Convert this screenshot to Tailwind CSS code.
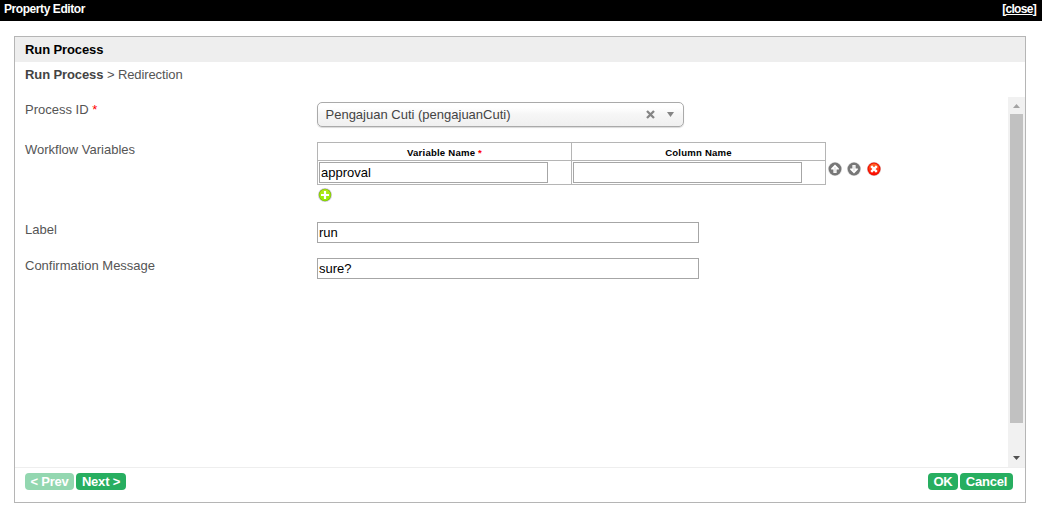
<!DOCTYPE html>
<html lang="en">
<head>
<meta charset="utf-8">
<title>Property Editor</title>
<script src="https://cdn.jsdelivr.net/npm/@tailwindcss/browser@4"></script>
</head>
<body class="h-[513px] overflow-hidden bg-white font-['Liberation_Sans',Arial,sans-serif] text-[13px] leading-4 text-[#555]">
<header class="flex h-[21px] justify-between bg-black pl-1 pr-[6px] pt-px text-[12px] text-white">
  <span class="font-bold tracking-[-0.43px]">Property Editor</span>
  <span class="font-bold tracking-[-0.7px]">[<a class="underline">close</a>]</span>
</header>
<main class="ml-[14px] mt-[15px] flex h-[467px] w-[1012px] flex-col border border-[#b5b5b5]">
  <h1 class="h-[25px] shrink-0 bg-[#eee] pl-[10px] pt-[5px] font-bold tracking-[-0.1px] text-black">Run Process</h1>
  <nav class="h-[35px] shrink-0 pl-[10px] pt-[5px] tracking-[-0.1px]"><span class="font-bold text-[#444]">Run Process</span><span> &gt; Redirection</span></nav>
  <div class="flex h-[370px] shrink-0">
    <form class="flex-1 pl-[10px]">
      <div class="flex h-[44px] pt-1">
        <label class="w-[292px] pt-px">Process ID <span class="text-[#f00]">*</span></label>
        <div class="mt-px flex h-[25px] w-[367px] items-center rounded-[5px] border border-[#aaa] bg-linear-to-b from-white from-20% via-[#f6f6f6] via-50% to-[#f0f0f0] pl-[7.5px] pr-[9px] text-[#444] shadow-[0_1px_1px_rgba(0,0,0,0.15)]">
          <span class="flex-1 pt-px">Pengajuan Cuti (pengajuanCuti)</span>
          <svg class="mr-3 h-[9px] w-[9px]" viewBox="0 0 9 9"><path d="M1 1L8 8M8 1L1 8" stroke="#858585" stroke-width="2.3"/></svg>
          <svg class="h-[5px] w-[7px]" viewBox="0 0 7 5"><path d="M0 0H7L3.5 5Z" fill="#858585"/></svg>
        </div>
      </div>
      <div class="flex h-[81px]">
        <label class="w-[292px] pt-px">Workflow Variables</label>
        <div>
          <div class="flex">
            <div class="mt-px grid h-[43px] w-[509px] grid-cols-[254px_254px] grid-rows-[18px_24px] border-l border-t border-[#b5b5b5] text-black">
              <div class="border-b border-r border-[#b5b5b5] pt-[2px] text-center text-[9.6px] font-bold tracking-[0.2px]">Variable Name <span class="text-[#f00]">*</span></div>
              <div class="border-b border-r border-[#b5b5b5] pt-[2px] text-center text-[9.6px] font-bold tracking-[0.2px]">Column Name</div>
              <div class="border-b border-r border-[#b5b5b5] pl-px pt-px"><div class="h-[21px] w-[229px] border border-[#a6a6a6] pl-px pt-[2px]">approval</div></div>
              <div class="border-b border-r border-[#b5b5b5] pl-px pt-px"><div class="h-[21px] w-[229px] border border-[#a6a6a6]"></div></div>
            </div>
            <div class="ml-[2px] mt-[21px] flex">
              <svg class="h-[14px] w-[14px]" viewBox="0 0 14 14"><circle cx="7" cy="7" r="7" fill="#ddd"/><circle cx="7" cy="7" r="6.4" fill="#777"/><path d="M7 2.6L10.9 6.5V7.6H8.6V11H5.4V7.6H3.1V6.5Z" fill="#fff"/><path d="M7 5V10.5" stroke="#bbb" stroke-width=".6"/></svg>
              <svg class="ml-[5px] h-[14px] w-[14px]" viewBox="0 0 14 14"><circle cx="7" cy="7" r="7" fill="#ddd"/><circle cx="7" cy="7" r="6.4" fill="#777"/><path d="M7 11.4L10.9 7.5V6.4H8.6V3H5.4V6.4H3.1V7.5Z" fill="#fff"/><path d="M7 3.5V9" stroke="#bbb" stroke-width=".6"/></svg>
              <svg class="ml-[6px] h-[14px] w-[14px]" viewBox="0 0 14 14"><defs><linearGradient id="red" x2="0" y2="1"><stop stop-color="#ff6a28"/><stop offset="1" stop-color="#ff0800"/></linearGradient></defs><circle cx="7" cy="7" r="7" fill="#dac9c9"/><circle cx="7" cy="7" r="6.5" fill="#f01000"/><circle cx="7" cy="7" r="5.4" fill="url(#red)"/><path d="M4.2 4.2L9.8 9.8M9.8 4.2L4.2 9.8" stroke="#fff" stroke-width="2.4"/></svg>
            </div>
          </div>
          <svg class="ml-px mt-[3px] h-[14px] w-[14px]" viewBox="0 0 14 14"><defs><linearGradient id="green" x2="0" y2="1"><stop stop-color="#b4e51c"/><stop offset="1" stop-color="#91ee00"/></linearGradient></defs><circle cx="7" cy="7" r="7" fill="#d0c9dc"/><circle cx="7" cy="7" r="6.2" fill="#78b900"/><circle cx="7" cy="7" r="5.7" fill="url(#green)"/><path d="M7 3V11M3 7H11" stroke="#fff" stroke-width="2.2"/></svg>
        </div>
      </div>
      <div class="flex h-[36px]">
        <label class="w-[292px]">Label</label>
        <div class="h-[21px] w-[382px] border border-[#a6a6a6] pl-px pt-[2px] text-black">run</div>
      </div>
      <div class="flex h-[36px]">
        <label class="w-[292px]">Confirmation Message</label>
        <div class="h-[21px] w-[382px] border border-[#a6a6a6] pl-px pt-[2px] text-black">sure?</div>
      </div>
    </form>
    <div class="flex w-[17px] flex-col items-center bg-[#f1f1f1]">
      <svg class="h-[17px] w-[17px] shrink-0" viewBox="0 0 17 17"><path d="M5 11L8.5 7L12 11Z" fill="#a3a3a3"/></svg>
      <div class="h-[309px] w-[13px] bg-[#c1c1c1]"></div>
      <svg class="mt-auto h-[17px] w-[17px] shrink-0" viewBox="0 0 17 17"><path d="M5 6L8.5 10L12 6Z" fill="#505050"/></svg>
    </div>
  </div>
  <footer class="flex flex-1 items-start gap-[2px] border-t border-[#eee] pl-[10px] pr-3 pt-[5px] font-bold leading-[17px] tracking-[-0.2px] text-white">
    <span class="h-[17px] w-[49px] rounded-[4px] bg-[#93d7b0] text-center">&lt; Prev</span>
    <span class="h-[17px] w-[50px] rounded-[4px] bg-[#27ae60] text-center">Next &gt;</span>
    <span class="ml-auto h-[17px] w-[30px] rounded-[4px] bg-[#27ae60] text-center">OK</span>
    <span class="h-[17px] w-[53px] rounded-[4px] bg-[#27ae60] text-center">Cancel</span>
  </footer>
</main>
</body>
</html>
